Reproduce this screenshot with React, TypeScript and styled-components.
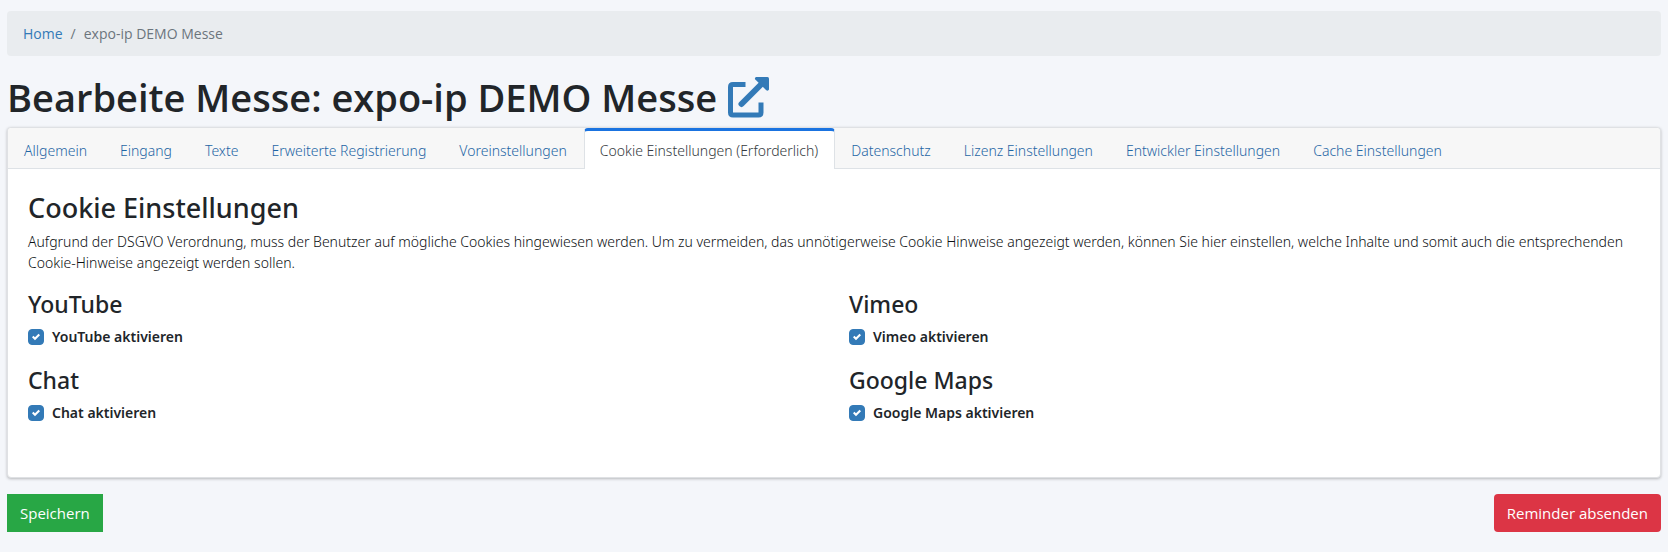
import React from "react";
import styled, { createGlobalStyle } from "styled-components";

const GlobalStyle = createGlobalStyle`
  *, *::before, *::after { box-sizing: border-box; }
  body {
    margin: 0;
    background: #f4f6fa;
    color: #212529;
    font-family: "Open Sans", "Noto Sans", sans-serif;
    font-size: 14px;
    line-height: 21px;
  }
  h1, h2, h3, p { margin: 0; }
  a { color: #337ab7; text-decoration: none; }
`;

const Page = styled.main`
  padding: 11px 7px 20px;
`;

const Breadcrumb = styled.nav`
  padding: 12px 16px;
  background: #e9ecef;
  border-radius: 4px;
`;

const Crumbs = styled.ol`
  display: flex;
  gap: 8px;
  margin: 0;
  padding: 0;
  list-style: none;
  color: #6c757d;
`;

const Title = styled.h1`
  display: flex;
  align-items: center;
  gap: 11px;
  margin: 16px 0 4px;
  font-size: 38px;
  line-height: 51px;
  font-weight: 600;
`;

const TitleLink = styled.a`
  display: flex;
  svg { display: block; }
`;

const Card = styled.section`
  background: #fff;
  border: 1px solid #dfe1e4;
  border-radius: 4px;
  box-shadow: 0 1px 3px rgba(0, 0, 0, 0.25);
`;

const TabBar = styled.nav`
  display: flex;
  height: 41px;
  background: #f7f7f7;
  border-bottom: 1px solid #dee2e6;
  border-radius: 4px 4px 0 0;
`;

const Tab = styled.a<{ $active?: boolean }>`
  height: ${(p) => (p.$active ? 41 : 40)}px;
  padding: ${(p) => (p.$active ? "9px 16px 8px 15px" : "12px 17px 7px 16px")};
  white-space: nowrap;
  font-family: "Noto Sans", sans-serif;
  font-weight: 300;
  color: #1f66a5;
  ${(p) =>
    p.$active
      ? `
    color: #343a40;
    background: #fff;
    border: 1px solid #dee2e6;
    border-top: 3px solid #1a73e0;
    border-bottom: 0;
    border-radius: 4px 4px 0 0;
  `
      : ""}
`;

const Content = styled.div`
  padding: 20px 20px 54px;
`;

const Intro = styled.p`
  font-family: "Noto Sans", sans-serif;
  font-weight: 300;
  color: #0c0f12;
`;

const Heading = styled.h2`
  margin-bottom: 4px;
  font-family: "Noto Sans", sans-serif;
  font-size: 27px;
  line-height: 38px;
  font-weight: 500;
`;

const Options = styled.div`
  display: grid;
  grid-template-columns: 1fr 1fr;
  gap: 18px 30px;
  margin-top: 16px;
`;

const OptionHeading = styled.h3`
  margin-bottom: 6px;
  font-family: "Noto Sans", sans-serif;
  font-size: 23px;
  line-height: 31px;
  font-weight: 500;
`;

const CheckLabel = styled.label`
  display: flex;
  align-items: center;
  gap: 8px;
  font-family: "Noto Sans", sans-serif;
  font-weight: 600;
`;

const CheckBox = styled.span`
  display: grid;
  width: 16px;
  height: 16px;
  > * { grid-area: 1 / 1; }
  svg { pointer-events: none; opacity: 0; place-self: center; }
  input:checked + svg { opacity: 1; }
`;

const CheckInput = styled.input`
  appearance: none;
  width: 16px;
  height: 16px;
  margin: 0;
  border: 1px solid #adb5bd;
  border-radius: 4px;
  &:checked { background: #337ab7; border-color: #337ab7; }
`;

const Actions = styled.div`
  display: flex;
  justify-content: space-between;
  margin-top: 16px;
`;

const Button = styled.button<{ $color: string; $radius: number }>`
  height: 38px;
  padding: 0 13px;
  border: 0;
  border-radius: ${(p) => p.$radius}px;
  background: ${(p) => p.$color};
  color: #fff;
  font-family: inherit;
  font-size: 15px;
  line-height: 24px;
`;

const tabs = [
  "Allgemein",
  "Eingang",
  "Texte",
  "Erweiterte Registrierung",
  "Voreinstellungen",
  "Cookie Einstellungen (Erforderlich)",
  "Datenschutz",
  "Lizenz Einstellungen",
  "Entwickler Einstellungen",
  "Cache Einstellungen",
];
const activeTab = 5;
const options = ["YouTube", "Vimeo", "Chat", "Google Maps"];

function ExternalIcon() {
  return (
    <svg width="41" height="41" viewBox="0 0 41 41" fill="none" aria-hidden="true">
      <path d="M17.500 7.500H5Q2.500 7.500 2.500 10V35.500Q2.500 38 5 38H30.500Q33 38 33 35.500V25.500" stroke="currentColor" strokeWidth="5" />
      <path d="M13.500 27L33 7.500" stroke="currentColor" strokeWidth="6" strokeLinecap="round" />
      <path d="M28 0H39.500Q41 0 41 1.500V12.500Q40 14.500 38 13L27.500 2.800Q26 1 28 0Z" fill="currentColor" />
    </svg>
  );
}

function Option({ name }: { name: string }) {
  return (
    <div>
      <OptionHeading>{name}</OptionHeading>
      <CheckLabel>
        <CheckBox>
          <CheckInput type="checkbox" defaultChecked />
          <svg width="8" height="8" viewBox="0 0 8 8" aria-hidden="true">
            <path fill="#fff" d="M6.564.75l-3.590 3.612-1.538-1.550L0 4.260 2.974 7.250 8 2.193z" />
          </svg>
        </CheckBox>
        {name} aktivieren
      </CheckLabel>
    </div>
  );
}

export default function App() {
  return (
    <>
      <GlobalStyle />
      <Page>
        <Breadcrumb aria-label="Breadcrumb">
          <Crumbs>
            <li><a href="#home">Home</a></li>
            <li aria-hidden="true">/</li>
            <li aria-current="page">expo-ip DEMO Messe</li>
          </Crumbs>
        </Breadcrumb>
        <Title>
          Bearbeite Messe: expo-ip DEMO Messe
          <TitleLink href="#messe" aria-label="Messe öffnen"><ExternalIcon /></TitleLink>
        </Title>
        <Card>
          <TabBar>
            {tabs.map((tab, i) => (
              <Tab key={tab} href={`#tab-${i}`} $active={i === activeTab} aria-current={i === activeTab ? "page" : undefined}>
                {tab}
              </Tab>
            ))}
          </TabBar>
          <Content>
            <Heading>Cookie Einstellungen</Heading>
            <Intro>
              Aufgrund der DSGVO Verordnung, muss der Benutzer auf mögliche Cookies hingewiesen werden. Um zu
              vermeiden, das unnötigerweise Cookie Hinweise angezeigt werden, können Sie hier einstellen, welche
              Inhalte und somit auch die entsprechenden Cookie-Hinweise angezeigt werden sollen.
            </Intro>
            <Options>
              {options.map((name) => <Option key={name} name={name} />)}
            </Options>
          </Content>
        </Card>
        <Actions>
          <Button type="submit" $color="#28a745" $radius={0}>Speichern</Button>
          <Button type="button" $color="#dc3545" $radius={4}>Reminder absenden</Button>
        </Actions>
      </Page>
    </>
  );
}
